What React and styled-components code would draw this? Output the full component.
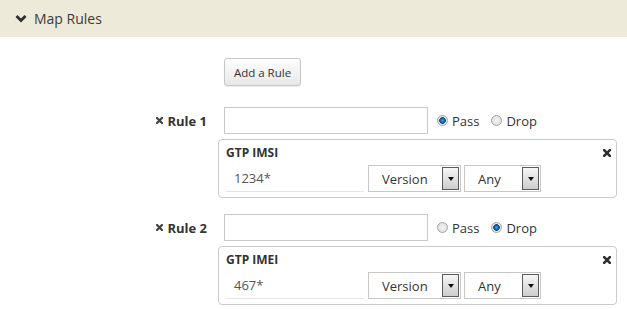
import React, { useState } from 'react';
import styled, { createGlobalStyle } from 'styled-components';

const GlobalStyle = createGlobalStyle`
  body {
    margin: 0;
    background: #fff;
    font-family: 'Open Sans', 'Liberation Sans', sans-serif;
    color: #333;
  }
`;

const Page = styled.div`
  width: 627px;
  height: 309px;
  overflow: hidden;
`;

const Header = styled.div`
  height: 37px;
  background: #edead9;
  display: flex;
  align-items: center;
  padding-left: 15px;
  gap: 7px;
  font-size: 14px;
  color: #3a3a3a;
  box-sizing: border-box;
`;

const Form = styled.div`
  display: grid;
  grid-template-columns: 207px 1fr;
  column-gap: 17px;
  padding-top: 21px;
`;

const Label = styled.div`
  grid-column: 1;
  display: flex;
  align-items: center;
  justify-content: flex-end;
  gap: 4px;
  font-size: 13px;
  font-weight: 700;
  color: #333;
  height: 27px;
  margin-top: ${(p) => p.top || 0}px;
`;

const Cell = styled.div`
  grid-column: 2;
  display: flex;
  align-items: center;
  margin-top: ${(p) => p.top || 0}px;
`;

const AddButton = styled.button`
  width: 77px;
  height: 28px;
  font-family: inherit;
  font-size: 11.5px;
  color: #333;
  border: 1px solid #c6c6c6;
  border-radius: 3px;
  background: linear-gradient(#fdfdfd, #e8e8e8);
  box-shadow: 0 1px 1px rgba(0, 0, 0, 0.08);
  padding: 0;
`;

const NameInput = styled.input`
  width: 204px;
  height: 27px;
  box-sizing: border-box;
  border: 1px solid #c9c9c9;
  background: #fff;
  font-family: inherit;
  font-size: 13px;
`;

const RadioGroup = styled.label`
  display: flex;
  align-items: center;
  gap: 4px;
  font-size: 13px;
  color: #333;
  margin-left: ${(p) => p.left}px;
  cursor: pointer;
`;

const RadioDot = styled.span`
  width: 11px;
  height: 11px;
  border-radius: 50%;
  box-sizing: border-box;
  border: 1px solid #a5a5a5;
  background: ${(p) =>
    p.checked
      ? 'radial-gradient(circle, #3fa3e0 0, #0d5a9a 2.5px, #0b3f6e 3px, #e8e8e8 3.6px, #dadada 100%)'
      : 'radial-gradient(circle, #f4f4f4 0, #d8d8d8 100%)'};
`;

const Card = styled.div`
  grid-column: 2;
  margin: 5px 10px 0 -6px;
  border: 1px solid #cbcbcb;
  border-radius: 4px;
  padding: 6px 7px 5px 7px;
  position: relative;
`;

const CardTitle = styled.div`
  font-size: 12px;
  font-weight: 700;
  color: #333;
  line-height: 14px;
`;

const CardRow = styled.div`
  display: flex;
  align-items: center;
  margin-top: 5px;
`;

const ValueField = styled.div`
  width: 130px;
  height: 26px;
  padding-left: 8px;
  display: flex;
  align-items: center;
  font-size: 13px;
  color: #555;
  border-bottom: 1px solid #e6e6e6;
  margin-right: 4px;
`;

const Select = styled.div`
  width: ${(p) => p.w}px;
  height: 27px;
  box-sizing: border-box;
  border: 1px solid #c8c8c8;
  display: flex;
  align-items: center;
  justify-content: space-between;
  padding-left: 13px;
  font-size: 13px;
  color: #333;
  margin-right: 3px;
`;

const Arrow = styled.span`
  width: 17px;
  height: 23px;
  box-sizing: border-box;
  border: 1px solid #5a5a5a;
  background: linear-gradient(#f6f6f6, #cdcdcd);
  display: flex;
  align-items: center;
  justify-content: center;
  margin-right: 1px;
  &::after {
    content: '';
    border-left: 3.5px solid transparent;
    border-right: 3.5px solid transparent;
    border-top: 4px solid #111;
  }
`;

const CloseBtn = styled.span`
  position: absolute;
  right: 5px;
  top: 9px;
  display: flex;
`;

const XIcon = ({ size = 8, color = '#333' }) => (
  <svg width={size} height={size} viewBox="0 0 8 8">
    <path d="M1.2 1.2 L6.8 6.8 M6.8 1.2 L1.2 6.8" stroke={color} strokeWidth="2.6" strokeLinecap="square" />
  </svg>
);

const rules = [
  { name: 'Rule 1', action: 'pass', title: 'GTP IMSI', value: '1234*' },
  { name: 'Rule 2', action: 'drop', title: 'GTP IMEI', value: '467*' },
];

export default function App() {
  const [actions, setActions] = useState(rules.map((r) => r.action));

  return (
    <Page>
      <GlobalStyle />
      <Header>
        <svg width="12" height="9" viewBox="0 0 12 9">
          <path d="M1.5 2 L6 6.5 L10.5 2" fill="none" stroke="#2e2e2e" strokeWidth="2.8" />
        </svg>
        Map Rules
      </Header>
      <Form>
        <Cell>
          <AddButton>Add a Rule</AddButton>
        </Cell>
        {rules.map((r, i) => (
          <React.Fragment key={r.name}>
            <Label top={i === 0 ? 21 : 16}>
              <XIcon size={7} color="#444" />
              {r.name}
            </Label>
            <Cell top={i === 0 ? 21 : 16}>
              <NameInput />
              {['pass', 'drop'].map((a, j) => (
                <RadioGroup
                  key={a}
                  left={j === 0 ? 9 : 12}
                  onClick={() => setActions(actions.map((v, k) => (k === i ? a : v)))}
                >
                  <RadioDot checked={actions[i] === a} />
                  {a === 'pass' ? 'Pass' : 'Drop'}
                </RadioGroup>
              ))}
            </Cell>
            <Card>
              <CardTitle>{r.title}</CardTitle>
              <CloseBtn>
                <XIcon size={8} color="#2e2e2e" />
              </CloseBtn>
              <CardRow>
                <ValueField>{r.value}</ValueField>
                <Select w={93}>
                  Version
                  <Arrow />
                </Select>
                <Select w={77}>
                  Any
                  <Arrow />
                </Select>
              </CardRow>
            </Card>
          </React.Fragment>
        ))}
      </Form>
    </Page>
  );
}
